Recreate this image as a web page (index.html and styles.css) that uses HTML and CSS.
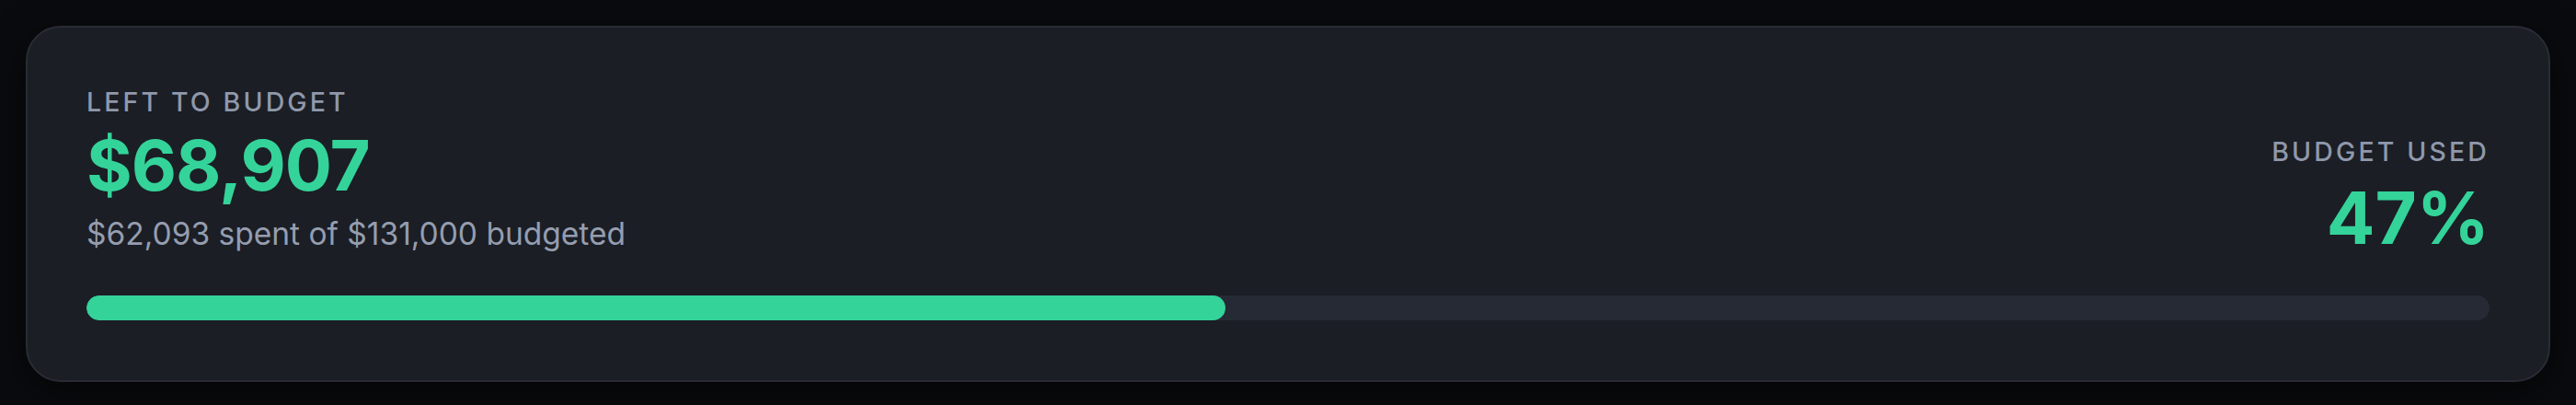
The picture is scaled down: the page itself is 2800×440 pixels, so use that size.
FILE: index.html
```html
<html>
<head>
<meta charset="utf-8">
<link rel="stylesheet" href="styles.css">
</head>
<body>

<div class="budget-card">
    <div class="budget-head">
        <div class="budget-left">
            <div class="budget-label">Left to Budget</div>
            <div class="budget-amount">$68,907</div>
            <div class="budget-sub">$62,093 spent of $131,000 budgeted</div>
        </div>
        <div class="budget-right">
            <div class="budget-label">Budget Used</div>
            <div class="budget-percent">47%</div>
        </div>
    </div>

    <div class="budget-track">
        <div class="budget-fill" style="width: 47.4%"></div>
    </div>
</div>

</body>
</html>
```

FILE: styles.css
```css
body {
    margin: 0;
    padding: 28px;
    background-color: #0a0b0e;
    font-family: "Inter", "Noto Sans", sans-serif;
}

.budget-card {
    padding: 64px 64px 65px;
    border: 2px solid #282c35;
    border-radius: 38px;
    background-color: #1b1e25;
    box-shadow: 0 12px 40px rgba(0, 0, 0, 0.55);
}

.budget-head {
    display: flex;
    justify-content: space-between;
    align-items: flex-end;
}

.budget-label {
    font-size: 28.5px;
    line-height: 34px;
    font-weight: 500;
    letter-spacing: 0.11em;
    text-transform: uppercase;
    color: #8f98ab;
}

.budget-amount {
    margin-top: 13px;
    font-size: 76px;
    line-height: 76px;
    font-weight: 700;
    letter-spacing: -1px;
    color: #34d399;
}

.budget-sub {
    margin-top: 13px;
    font-size: 33.5px;
    line-height: 48px;
    color: #959daf;
}

.budget-right {
    padding-bottom: 2px;
    text-align: right;
}

.budget-percent {
    margin-top: 16px;
    font-size: 78px;
    line-height: 78px;
    font-weight: 700;
    color: #34d399;
}

.budget-track {
    margin-top: 43px;
    height: 27px;
    border-radius: 14px;
    background-color: #262a34;
    overflow: hidden;
}

.budget-fill {
    height: 100%;
    border-radius: 14px;
    background-color: #34d399;
}
```
